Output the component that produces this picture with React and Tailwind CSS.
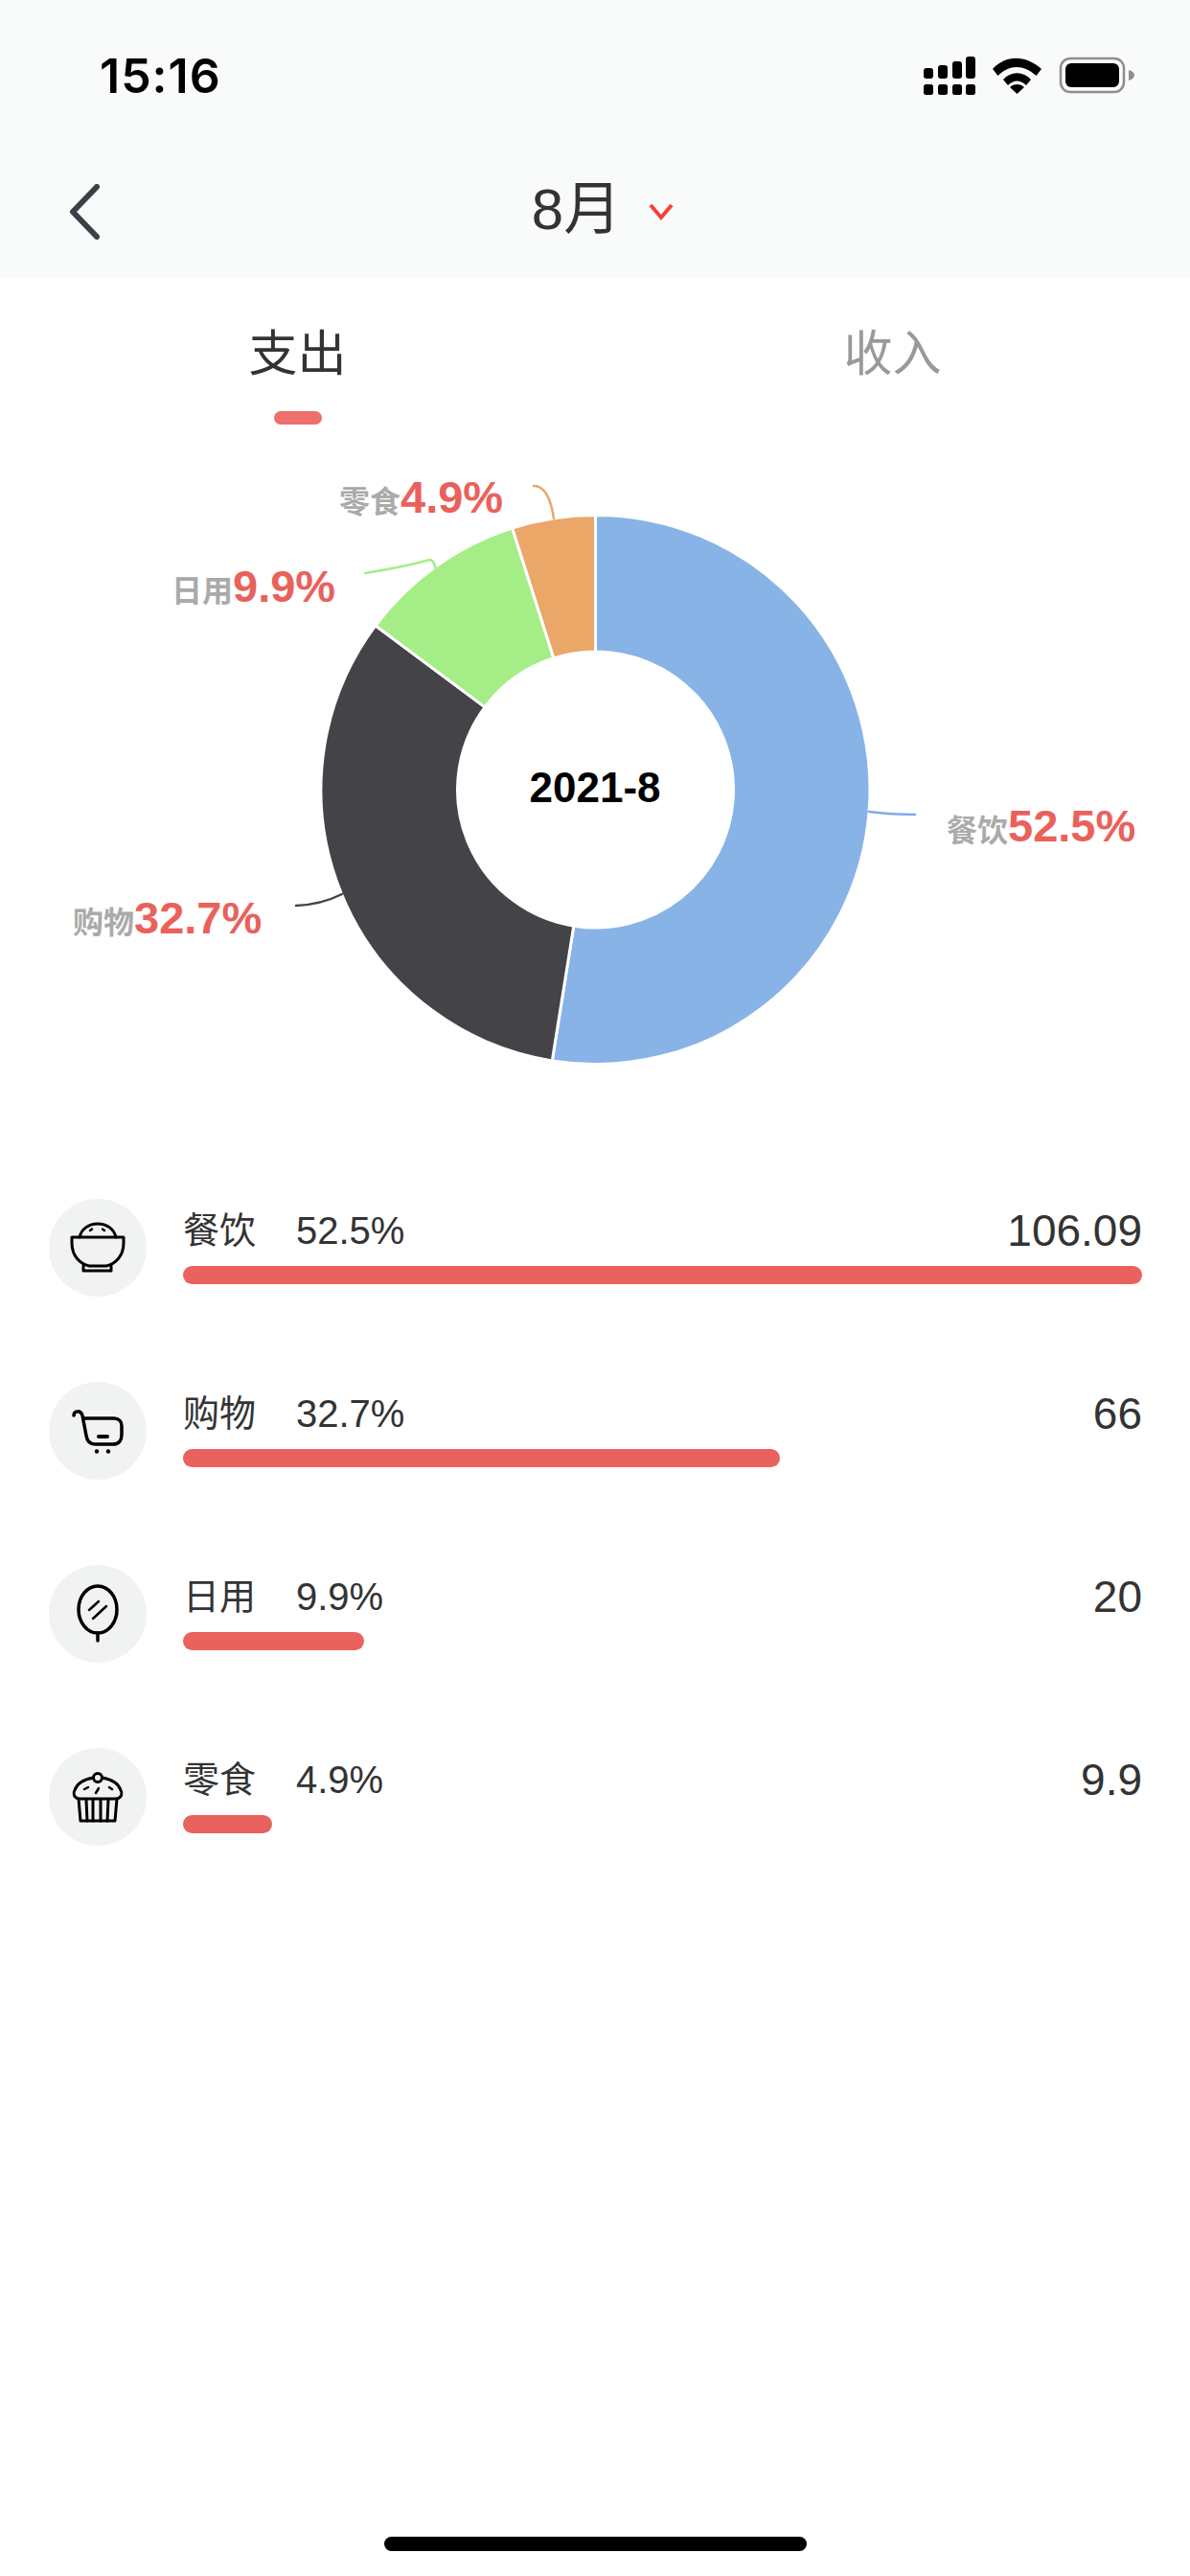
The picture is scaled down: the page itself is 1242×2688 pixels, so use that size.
const FONT = '"Liberation Sans","Noto Sans CJK SC",sans-serif';

const CX = 621.5, CY = 286, R = 286.5, r = 144;
const slices = [
  { v: 106.09, c: '#88b3e7' },
  { v: 66, c: '#434348' },
  { v: 20, c: '#a5ed87' },
  { v: 9.9, c: '#eaa768' },
];
const total = slices.reduce((s, x) => s + x.v, 0);
function arcs() {
  let a = 0;
  return slices.map((s) => {
    const a0 = a;
    const a1 = a + (s.v / total) * Math.PI * 2;
    a = a1;
    const p = (rad, t) => `${(CX + rad * Math.sin(t)).toFixed(2)} ${(CY - rad * Math.cos(t)).toFixed(2)}`;
    const large = a1 - a0 > Math.PI ? 1 : 0;
    return {
      c: s.c,
      d: `M${p(R, a0)}A${R} ${R} 0 ${large} 1 ${p(R, a1)}L${p(r, a1)}A${r} ${r} 0 ${large} 0 ${p(r, a0)}Z`,
    };
  });
}

function ChartLabel({ name, pct, className }) {
  return (
    <div className={`absolute flex items-baseline whitespace-nowrap ${className}`}>
      <span className="text-[32px] font-bold leading-none text-[#aaaaaa]">{name}</span>
      <span className="text-[47px] font-bold leading-none text-[#ea615c]">{pct}</span>
    </div>
  );
}

function Donut() {
  return (
    <div className="relative h-[602px] w-full">
      <svg width="1242" height="602" viewBox="0 0 1242 602" className="absolute left-0 top-0 block overflow-visible">
        {arcs().map((s, i) => (
          <path key={i} d={s.d} fill={s.c} stroke="#ffffff" strokeWidth="3" strokeLinejoin="round" />
        ))}
        <g fill="none" strokeWidth="2.5" strokeLinecap="round">
          <path d="M907 309Q930 312 955 312" stroke="#7fabe6" />
          <path d="M357 395Q335 406 309 407" stroke="#434348" />
          <path d="M381 60Q420 54 449 46Q453 47 455 56" stroke="#a5ed87" />
          <path d="M557 -31Q573 -31 578 3" stroke="#eaa768" />
        </g>
      </svg>
      <div className="absolute left-[621px] top-[284px] -translate-x-1/2 -translate-y-1/2 text-[44px] font-bold leading-none text-black">
        2021-8
      </div>
      <ChartLabel name="餐饮" pct="52.5%" className="left-[988px] top-[300px]" />
      <ChartLabel name="购物" pct="32.7%" className="left-[76px] top-[396px]" />
      <ChartLabel name="日用" pct="9.9%" className="left-[179px] top-[50px]" />
      <ChartLabel name="零食" pct="4.9%" className="left-[354px] top-[-43px]" />
    </div>
  );
}

const ic = { fill: 'none', stroke: '#000', strokeWidth: 3, strokeLinecap: 'round', strokeLinejoin: 'round' };

function Bowl() {
  return (
    <svg width="102" height="102" viewBox="0 0 102 102" {...ic}>
      <path d="M24 40H78V46C78 60 69 68 60 70H42C33 68 24 60 24 46Z" />
      <path d="M36 70V75H65V70" />
      <path d="M32 40C34 31 42 26 51 26S68 31 70 40" />
      <path d="M43 33l2-1.500M56 31.500l2 1.500" strokeWidth="2.500" />
    </svg>
  );
}
function Cart() {
  return (
    <svg width="102" height="102" viewBox="0 0 102 102" {...ic} strokeWidth="3.500">
      <path d="M26 35C26 30 33 29 35 35L39 56C40 62 43 65 48 65H67C73 65 76 61 76 55V46C76 41 73 38 68 38H37" />
      <path d="M52 57H61" strokeWidth="4" />
      <circle cx="50" cy="72.500" r="2.200" fill="#000" stroke="none" />
      <circle cx="62" cy="72.500" r="2.200" fill="#000" stroke="none" />
    </svg>
  );
}
function Mirror() {
  return (
    <svg width="102" height="102" viewBox="0 0 102 102" {...ic} strokeWidth="3.500">
      <ellipse cx="51" cy="46.500" rx="20" ry="24.500" />
      <path d="M51 71V79" />
      <path d="M42 47L52 38M46 56L60 43" strokeWidth="2.500" />
    </svg>
  );
}
function Muffin() {
  return (
    <svg width="102" height="102" viewBox="0 0 102 102" {...ic}>
      <path d="M31 53C26 52 25 47 27 44C29 38 35 33 46.500 31M55.500 31C67 33 73 38 75 44C77 47 76 52 71 53H31" />
      <circle cx="51" cy="31" r="4.500" />
      <path d="M31 53L33 76H69L71 53" />
      <path d="M39 54L40 76M46 54V76M54 54V76M62 54L61 76" />
      <path d="M37 43l4-2M49 47l3-5M63 41l3 2" strokeWidth="2.500" />
    </svg>
  );
}

const rows = [
  { name: '餐饮', pct: '52.5%', amt: '106.09', v: 106.09, Icon: Bowl },
  { name: '购物', pct: '32.7%', amt: '66', v: 66, Icon: Cart },
  { name: '日用', pct: '9.9%', amt: '20', v: 20, Icon: Mirror },
  { name: '零食', pct: '4.9%', amt: '9.9', v: 9.9, Icon: Muffin },
];

function Row({ name, pct, amt, v, Icon }) {
  return (
    <div className="flex h-[102px] items-center pl-[51px] pr-[50px]">
      <div className="flex h-[102px] w-[102px] shrink-0 items-center justify-center rounded-full bg-[#f1f2f2]">
        <Icon />
      </div>
      <div className="ml-[38px] flex h-full flex-1 flex-col">
        <div className="flex h-[70px] items-center pb-[4px] text-[#333333]">
          <span className="w-[118px] text-[38px] leading-none">{name}</span>
          <span className="flex-1 text-[40px] leading-none">{pct}</span>
          <span className="text-[46px] leading-none">{amt}</span>
        </div>
        <div className="h-[19px] rounded-full bg-[#ea625d]" style={{ width: `${(v / 106.09) * 100}%` }} />
      </div>
    </div>
  );
}

function StatusIcons() {
  return (
    <svg width="230" height="50" viewBox="0 0 230 50" className="block">
      <g fill="#000">
        <rect x="3" y="12" width="10" height="11" rx="3" />
        <rect x="18" y="9" width="10" height="14" rx="3" />
        <rect x="33" y="5" width="10" height="18" rx="3" />
        <rect x="47" y="0" width="10" height="23" rx="3" />
        <rect x="3" y="29" width="10" height="11" rx="2.500" />
        <rect x="18" y="29" width="10" height="11" rx="2.500" />
        <rect x="33" y="29" width="10" height="11" rx="2.500" />
        <rect x="47" y="29" width="10" height="11" rx="2.500" />
        <path d="M75 13C89 -2 109 -2 126 13L120.500 20C107 8 93 8 80.500 20Z" />
        <path d="M86 24C94 15 107 15 115 24L110 30C104 24 97 24 91 30Z" />
        <path d="M93 32C97 28 104 28 108 32L100.500 39Z" />
      </g>
      <rect x="146" y="2" width="66" height="35" rx="10" fill="none" stroke="#8e8e8e" strokeWidth="2.500" />
      <rect x="151" y="7" width="56" height="25" rx="6" fill="#000" />
      <path d="M217 14C221 15 223 17 223 19.500S221 24 217 25Z" fill="#8e8e8e" />
    </svg>
  );
}

export default function App() {
  return (
    <div className="flex min-h-[2688px] w-[1242px] flex-col bg-white" style={{ fontFamily: FONT }}>
      <header className="h-[289px] bg-[#f9fafa]">
        <div className="flex h-[130px] items-start justify-between pl-[104px] pr-[51px] pt-[54px]">
          <span className="text-[50px] font-semibold leading-none tracking-[1px] text-black" style={{ fontFamily: 'Inter,sans-serif' }}>15:16</span>
          <div className="pt-[5px]"><StatusIcons /></div>
        </div>
        <div className="relative flex h-[159px] items-start justify-center pr-[39px] pt-[54px]">
          <svg width="36" height="58" viewBox="0 0 36 58" className="absolute left-[70px] top-[62px]">
            <path d="M31 3L6 29L31 55" fill="none" stroke="#3a4049" strokeWidth="6" strokeLinecap="round" strokeLinejoin="round" />
          </svg>
          <span className="text-[60px] leading-[70px] text-[#333333]">8月</span>
          <svg width="28" height="20" viewBox="0 0 28 20" className="absolute left-[676px] top-[81px]">
            <path d="M3 3L14 16L25 3" fill="none" stroke="#ef4438" strokeWidth="4" />
          </svg>
        </div>
      </header>

      <div className="grid grid-cols-2 pt-[51px]">
        <div className="flex flex-col items-center">
          <span className="text-[51px] leading-[60px] text-[#333333]">支出</span>
          <div className="mt-[29px] h-[14px] w-[50px] rounded-full bg-[#ee6f6c]" />
        </div>
        <div className="flex flex-col items-center">
          <span className="text-[51px] leading-[60px] text-[#999999]">收入</span>
        </div>
      </div>

      <div className="mt-[95px]">
        <Donut />
      </div>

      <div className="mt-[111px] flex flex-col gap-[89px]">
        {rows.map((row) => (
          <Row key={row.name} {...row} />
        ))}
      </div>

      <div className="mt-auto flex justify-center pb-[26px]">
        <div className="h-[15px] w-[441px] rounded-full bg-black" />
      </div>
    </div>
  );
}
